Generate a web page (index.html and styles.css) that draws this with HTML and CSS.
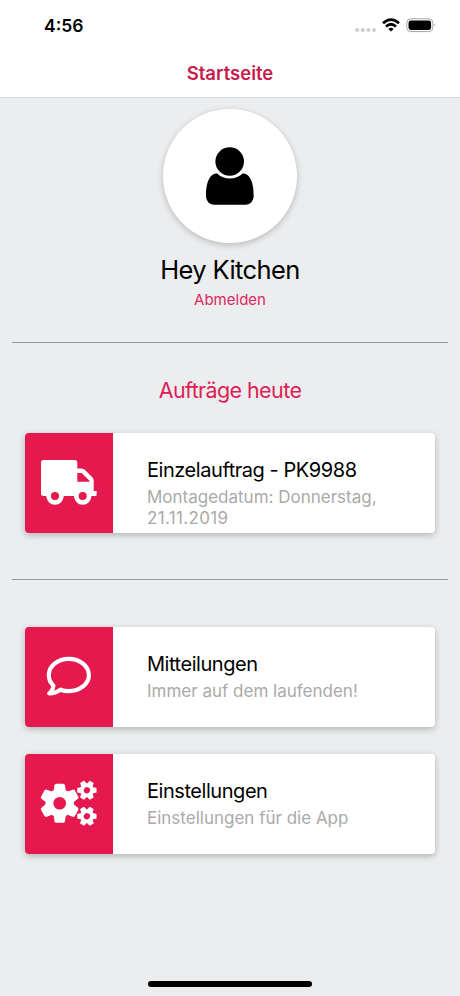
FILE: index.html
```html
<!DOCTYPE html>
<html lang="de">
<head>
<meta charset="utf-8">
<title>Startseite</title>
<link rel="stylesheet" href="styles.css">
</head>
<body>
<header class="header">
  <div class="status">
    <span class="time">4:56</span>
    <svg class="indicators" width="84" height="18" viewBox="0 0 84 18">
      <g fill="#cfcfcf"><circle cx="5.2" cy="13" r="2.1"/><circle cx="10.8" cy="13" r="2.1"/><circle cx="16.4" cy="13" r="2.1"/><circle cx="22" cy="13" r="2.1"/></g>
      <g fill="none" stroke="#000" stroke-width="2.7"><path d="M31 6.3Q39 -.9 47 6.3"/><path d="M34 9.5Q39 5 44 9.5"/></g>
      <path d="M36.4 11.9Q39 9.8 41.6 11.9L39 14.5z"/>
      <rect x="54.8" y="1.8" width="26" height="12.8" rx="4" fill="#fff" stroke="#a5a5a5"/>
      <rect x="56.5" y="3.5" width="22.6" height="9.4" rx="2.4"/>
      <path d="M82.1 6.2Q83.8 8.2 82.1 10.2z" fill="#999"/>
    </svg>
  </div>
  <h1 class="title">Startseite</h1>
</header>
<main>
  <section class="profile">
    <div class="avatar">
      <svg width="134" height="134" viewBox="0 0 134 134">
        <path d="M54 64.4C46 64.4 43 75 43 86.5C43 92 46.5 95.7 51 95.7H82.7C87.2 95.7 90.7 92 90.7 86.5C90.7 75 87.7 64.4 79.7 64.4Q74 69.5 66.85 69.5T54 64.4z"/>
        <circle cx="66.7" cy="52.5" r="14.3"/>
      </svg>
    </div>
    <div class="name">Hey Kitchen</div>
    <div class="logout">Abmelden</div>
  </section>
  <section class="orders">
    <h2 class="heading">Aufträge heute</h2>
    <article class="card">
      <div class="tile">
        <svg width="89" height="100" viewBox="0 0 89 100">
          <path fill="#fff" fill-rule="evenodd" d="M18.5 27H49.7Q52.3 27 52.3 29.6V35.4H56.5Q58.5 35.4 60 36.9L67.3 44.2Q68.7 45.6 68.7 47.6V58H71.7V61.5Q71.7 63 70.2 63H18.5Q16 63 16 60.5V29.5Q16 27 18.5 27zM52.3 40V48.8H64.5V47.8L56.7 40z"/>
          <g fill="#e6194f" stroke="#fff" stroke-width="4.7"><circle cx="30" cy="63" r="6.4"/><circle cx="57.7" cy="63" r="6.4"/></g>
        </svg>
      </div>
      <div class="copy">
        <h3>Einzelauftrag - PK9988</h3>
        <p>Montagedatum: Donnerstag,<br><span class="date">21.11.2019</span></p>
      </div>
    </article>
  </section>
  <section class="menu">
    <article class="card">
      <div class="tile">
        <svg width="89" height="100" viewBox="0 0 89 100">
          <path fill="none" stroke="#fff" stroke-width="4.2" stroke-linejoin="round" d="M28.3 58.5C25.5 55.8 23.8 52 23.8 48C23.8 39 32.7 31.8 43.8 31.8S63.9 39 63.9 48S54.9 64.2 43.8 64.2C40.8 64.2 38 63.7 35.5 62.7C32.5 65 28.5 66.5 24.2 66.5C26.5 64.3 28.5 61.5 28.3 58.5z"/>
        </svg>
      </div>
      <div class="copy"><h3>Mitteilungen</h3><p>Immer auf dem laufenden!</p></div>
    </article>
    <article class="card">
      <div class="tile">
        <svg width="89" height="100" viewBox="0 0 89 100">
          <defs>
            <path id="tooth" d="M-6.2 -12L-5.2 -18Q-4.9 -19.5 -3.4 -19.5H3.4Q4.9 -19.5 5.2 -18L6.2 -12z"/>
            <g id="gear">
              <circle r="14.2"/>
              <use href="#tooth"/><use href="#tooth" transform="rotate(60)"/><use href="#tooth" transform="rotate(120)"/><use href="#tooth" transform="rotate(180)"/><use href="#tooth" transform="rotate(240)"/><use href="#tooth" transform="rotate(300)"/>
              <circle r="6.3" fill="#e6194f"/>
            </g>
          </defs>
          <g fill="#fff">
            <use href="#gear" transform="translate(34.7 49.2)"/>
            <use href="#gear" transform="translate(61.9 36.2) rotate(30) scale(.495)"/>
            <use href="#gear" transform="translate(61.9 62.2) rotate(30) scale(.495)"/>
          </g>
        </svg>
      </div>
      <div class="copy"><h3>Einstellungen</h3><p>Einstellungen für die App</p></div>
    </article>
  </section>
</main>
<footer class="home"><div class="bar"></div></footer>
</body>
</html>
```
FILE: styles.css
```css
* { box-sizing: border-box; }
body {
  margin: 0;
  height: 996px;
  display: flex;
  flex-direction: column;
  overflow: hidden;
  background: #ebedee;
  color: #000;
  font-family: Inter, "Liberation Sans", sans-serif;
}
h1, h2, h3, p { margin: 0; font-weight: 400; white-space: nowrap; }
.header { height: 98px; background: #fff; border-bottom: 1px solid #d5d7d9; }
.status { height: 50px; padding: 14px 24px 0 44px; display: flex; justify-content: space-between; }
.time { font-size: 17.5px; line-height: 24px; font-weight: 600; }
.indicators { margin-top: 3px; }
.title { color: #c51c4b; font-size: 18.5px; line-height: 26px; font-weight: 600; text-align: center; padding-top: 10px; }
main { flex: 1; }
.profile { height: 245px; margin: 0 12px; padding-top: 11px; border-bottom: 1px solid #96989a; text-align: center; }
.avatar { width: 134px; height: 134px; margin: 0 auto; border-radius: 50%; background: #fff; box-shadow: 0 2px 6px rgba(0,0,0,.22); }
.avatar svg, .tile svg { display: block; }
.name { margin-top: 10px; font-size: 25.5px; line-height: 34px; letter-spacing: -.6px; }
.logout { color: #dc2860; font-size: 15px; line-height: 20px; margin-top: 3px; }
.orders { height: 237px; margin: 0 12px; padding: 32px 13px 0; border-bottom: 1px solid #96989a; }
.heading { color: #df1d56; text-align: center; font-size: 21.5px; line-height: 30px; margin-bottom: 28px; letter-spacing: -.6px; }
.card { height: 100px; display: flex; background: #fff; border-radius: 4px; box-shadow: 0 2px 6px rgba(0,0,0,.25); }
.tile { width: 88.4px; background: #e6194f; border-radius: 4px 0 0 4px; overflow: hidden; }
.copy { padding: 23px 0 0 33.6px; }
.copy h3 { font-size: 20px; line-height: 28px; letter-spacing: -.45px; }
.copy p { color: #aaa; font-size: 17px; line-height: 21px; margin-top: 3px; }
.date { letter-spacing: .35px; }
.menu { display: grid; gap: 27px; padding: 47px 25px 0; }
.home { height: 18px; display: flex; justify-content: center; padding-top: 3px; }
.bar { width: 164px; height: 5.5px; border-radius: 3px; background: #000; }
```
